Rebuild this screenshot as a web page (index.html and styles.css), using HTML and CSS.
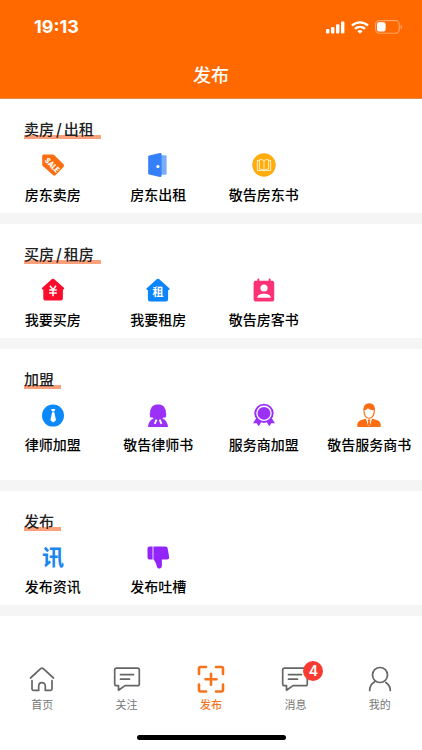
FILE: index.html
```html
<!DOCTYPE html>
<html lang="zh-CN">
<head>
<meta charset="utf-8">
<meta name="viewport" content="width=device-width, initial-scale=1">
<title>发布</title>
<link rel="stylesheet" href="styles.css">
</head>
<body>
<header class="header">
  <div class="status">
    <span class="time">19:13</span>
    <div class="status-icons">
      <svg width="19" height="13" viewBox="0 0 19 13" fill="#fff" aria-hidden="true">
        <rect x="0" y="8" width="3.4" height="4.5" rx="1"/><rect x="5" y="6" width="3.4" height="6.5" rx="1"/><rect x="10" y="3.2" width="3.4" height="9.3" rx="1"/><rect x="15" y="0.4" width="3.4" height="12.1" rx="1"/>
      </svg>
      <svg width="18" height="13" viewBox="0 0 18 13" fill="none" stroke="#fff" stroke-width="2.3" aria-hidden="true">
        <path d="M1 4.6a11.4 11.4 0 0 1 16 0"/><path d="M4 7.9a7.2 7.2 0 0 1 10 0"/><path d="M9 12.8 6.4 10.2a3.8 3.8 0 0 1 5.2 0z" fill="#fff" stroke="none"/>
      </svg>
      <svg width="28" height="14" viewBox="0 0 28 14" aria-hidden="true">
        <rect x=".6" y=".6" width="23.6" height="12.6" rx="3.6" fill="none" stroke="#ffa566" stroke-width="1.1"/><rect x="2" y="2.2" width="8.6" height="9.4" rx="2" fill="#fff"/><path d="M25.6 4.8c2 .8 2 3.6 0 4.4z" fill="#ffa566"/>
      </svg>
    </div>
  </div>
  <h1 class="page-title">发布</h1>
</header>

<main class="sections">
  <section class="section">
    <h2 class="section-title">卖房<span class="slash">/</span>出租</h2>
    <div class="grid">
      <a class="item" href="#">
        <svg class="icon" viewBox="0 0 24 24" aria-hidden="true"><path d="M2.6 1.5h9.2a2 2 0 0 1 1.3.5l9.4 9.3a2 2 0 0 1 0 2.6l-7.8 8.2a2 2 0 0 1-2.7 0L1.8 13a2 2 0 0 1-.6-1.3V3a1.5 1.5 0 0 1 1.4-1.5z" fill="#fa6d10"/><text class="sale" x="11.4" y="15" transform="rotate(45 11.4 12)">SALE</text></svg>
        <span class="label">房东卖房</span>
      </a>
      <a class="item" href="#">
        <svg class="icon" viewBox="0 0 24 24" aria-hidden="true"><path d="M15 2.2h4.4a1.2 1.2 0 0 1 1.2 1.2v17.2a1.2 1.2 0 0 1-1.2 1.2H15z" fill="#78acf9"/><path d="M3.1 2.5 14 0a1.3 1.3 0 0 1 1.6 1.2v21.4A1.3 1.3 0 0 1 14 23.9L3.1 21.5a1.2 1.2 0 0 1-.9-1.1V3.6a1.2 1.2 0 0 1 .9-1.1z" fill="#357ff8"/><circle cx="11.9" cy="13.5" r="1.6" fill="#fff"/></svg>
        <span class="label">房东出租</span>
      </a>
      <a class="item" href="#">
        <svg class="icon" viewBox="0 0 24 24" aria-hidden="true"><circle cx="12" cy="12" r="11.7" fill="#ffad0d"/><path d="M12 7.7C10.8 6.6 9 6.3 7.4 6.7v9.6c1.700-.3 3.400 0 4.600 1 1.200-1 2.900-1.300 4.600-1V6.700c-1.600-.4-3.400-.1-4.600 1zM12 7.700v9.600M7.400 7.500H5.300v10h5.400c.6.500 2 .500 2.600 0h5.400v-10h-2.100" fill="none" stroke="#fff3d5" stroke-width=".9" stroke-linejoin="round"/></svg>
        <span class="label">敬告房东书</span>
      </a>
    </div>
  </section>

  <section class="section">
    <h2 class="section-title">买房<span class="slash">/</span>租房</h2>
    <div class="grid">
      <a class="item" href="#">
        <svg class="icon" viewBox="0 0 24 24" aria-hidden="true"><path d="M11 1.100a1.700 1.700 0 0 1 2 0l9.900 8.700c.7.700.3 1.700-.6 1.700h-.4v8.900a2 2 0 0 1-2 2H4.300a2 2 0 0 1-2-2v-8.900h-.6c-.9 0-1.200-1-.5-1.700z" fill="#fb0d2c"/><path d="m9 7.800 3 4 3-4M12 11.800v6.500M8.200 12.100h7.600M8.200 15h7.600" fill="none" stroke="#fff" stroke-width="1.500"/></svg>
        <span class="label">我要买房</span>
      </a>
      <a class="item" href="#">
        <svg class="icon" viewBox="0 0 24 24" aria-hidden="true"><path d="M11 1a1.700 1.700 0 0 1 2 0l10.300 9.200c.6.600.3 1.700-.6 1.700h-.6v9.300a2.200 2.200 0 0 1-2.200 2.200H4.100a2.200 2.200 0 0 1-2.200-2.200v-9.300h-.6c-.9 0-1.200-1.100-.6-1.700z" fill="#0b85fb"/><text class="rent" x="12" y="18.200">租</text></svg>
        <span class="label">我要租房</span>
      </a>
      <a class="item" href="#">
        <svg class="icon" viewBox="0 0 24 24" aria-hidden="true"><path d="M5.300 1.500a1 1 0 0 1 2 0v1.300h9.400V1.500a1 1 0 0 1 2 0v1.300h1.500a2 2 0 0 1 2 2v16.600a2 2 0 0 1-2 2H3.600a2 2 0 0 1-2-2V4.800a2 2 0 0 1 2-2h1.700z" fill="#fb3275"/><circle cx="12" cy="10" r="3.600" fill="#fff"/><path d="M5.200 19.700c0-5.400 13.600-5.400 13.600 0z" fill="#fff"/></svg>
        <span class="label">敬告房客书</span>
      </a>
    </div>
  </section>

  <section class="section section-tall">
    <h2 class="section-title">加盟</h2>
    <div class="grid">
      <a class="item" href="#">
        <svg class="icon" viewBox="0 0 24 24" aria-hidden="true"><circle cx="12" cy="12.600" r="11" fill="#0b89fb"/><path d="M10 6.100h4.400l-1.200 2.500h-2zM11.100 9.200h2.200l1.700 8-2.800 2.400-2.800-2.400z" fill="#fff"/></svg>
        <span class="label">律师加盟</span>
      </a>
      <a class="item" href="#">
        <svg class="icon" viewBox="0 0 24 24" aria-hidden="true"><path d="M12 1.500c4 0 6.800 2 7 4.800 1 .7 1.200 1.500.6 2.700.9 1 .8 2 .4 3 .6 1.500-.2 2.600-1.500 2.600-1 0-1.600.4-2 1 3.500 1.500 5 4.200 5.600 8.400H1.900c.6-4.200 2.100-6.900 5.600-8.400-.4-.6-1-1-2-1-1.300 0-2.100-1.100-1.500-2.600-.4-1-.5-2 .4-3-.6-1.200-.4-2 .6-2.700.2-2.800 3-4.800 7-4.800z" fill="#9b30f7"/><path d="M9.600 16.200 11.400 17 9.600 21.200 7.900 20.600zM12.800 17l1.800-.8 1.700 4.400-1.700.6z" fill="#fff"/></svg>
        <span class="label">敬告律师书</span>
      </a>
      <a class="item" href="#">
        <svg class="icon" viewBox="0 0 24 24" aria-hidden="true"><path d="m5 14-4 6.300 3.700-.1 1.900 3 4-6h2.800l4 6 1.900-3 3.700.1-4-6.300z" fill="#9b30f7"/><circle cx="12" cy="10.300" r="8.700" fill="#fff" stroke="#9b30f7" stroke-width="1.900"/><circle cx="12" cy="10.300" r="6.400" fill="#9b30f7"/></svg>
        <span class="label">服务商加盟</span>
      </a>
      <a class="item" href="#">
        <svg class="icon" viewBox="0 0 24 24" aria-hidden="true"><path d="M6.500 8.500C6 3.200 8.300.3 12.200.3c4.200 0 6.300 3 5.700 7.700-.2 5-2.500 7.700-5.800 7.700-3.200 0-5.300-2.500-5.600-7.200z" fill="#fa6d10"/><path d="M7.500 7.300c1.600-.2 2.600-.9 3.300-2 1.500 1.300 3.400 1.900 6 2-.1 4.500-1.900 7.500-4.700 7.500s-4.500-3-4.600-7.500z" fill="#fff"/><path d="M8.500 15.700 3.500 17.200C1 18.200.2 20 .2 23a1 1 0 0 0 1 1h21.600a1 1 0 0 0 1-1c0-3-.8-4.800-3.300-5.800l-5-1.500L12 17z" fill="#fa6d10"/><path d="M8.900 15.600 11 22.500 12 23l1-.5 2.100-6.900L12 16.300z" fill="#fff"/><path d="M11 16.500h2l.4 1.200-.7.9.6 3.200L12 23l-1.300-1.200.6-3.200-.7-.9z" fill="#fa6d10"/></svg>
        <span class="label">敬告服务商书</span>
      </a>
    </div>
  </section>

  <section class="section">
    <h2 class="section-title">发布</h2>
    <div class="grid">
      <a class="item" href="#">
        <svg class="icon" viewBox="0 0 24 24" aria-hidden="true"><text class="news" x="12" y="20">讯</text></svg>
        <span class="label">发布资讯</span>
      </a>
      <a class="item" href="#">
        <svg class="icon" viewBox="0 0 24 24" aria-hidden="true"><path d="M3.500 1.500h3.100v13H3.500a2 2 0 0 1-2-2v-9a2 2 0 0 1 2-2zM7.400 1.500h12.200a2 2 0 0 1 2 1.600l1.500 8.700a2.300 2.300 0 0 1-2.300 2.700h-4.900v5.700c0 2.100-1 3.300-2.500 3.300s-2.200-.8-2.600-2.300c-.9-3.300-1.700-5.300-3.400-6.700z" fill="#9226fa"/></svg>
        <span class="label">发布吐槽</span>
      </a>
    </div>
  </section>
</main>

<nav class="tabs">
  <a class="tab" href="#">
    <svg class="tab-icon" viewBox="0 0 28 28" aria-hidden="true"><path d="M2.500 13 12.700 3.700a1.900 1.900 0 0 1 2.600 0L25.500 13M4 15.700v8a1.700 1.700 0 0 0 1.700 1.700h5V21c0-4.500 6.600-4.500 6.600 0v4.400h5a1.700 1.700 0 0 0 1.700-1.700v-8"/></svg>
    <span>首页</span>
  </a>
  <a class="tab" href="#">
    <svg class="tab-icon" viewBox="0 0 28 28" aria-hidden="true"><path d="M3.400 3.200h21.200a1.700 1.700 0 0 1 1.700 1.700v14a1.700 1.700 0 0 1-1.700 1.700H12l-6.500 4.700v-4.700H3.400a1.700 1.700 0 0 1-1.700-1.700v-14a1.700 1.700 0 0 1 1.700-1.700zM7.500 9.600h13M7.500 14.200h9"/></svg>
    <span>关注</span>
  </a>
  <a class="tab tab-active" href="#" aria-current="page">
    <svg class="tab-icon" viewBox="0 0 28 28" aria-hidden="true"><path d="M2 9V3.500A1.500 1.500 0 0 1 3.500 2H9M19 2h5.500A1.500 1.500 0 0 1 26 3.500V9M26 19.500V25a1.500 1.500 0 0 1-1.500 1.500H19M9 26.500H3.500A1.500 1.500 0 0 1 2 25v-5.500M8.500 14.300h11M14 8.800v11"/></svg>
    <span>发布</span>
  </a>
  <a class="tab" href="#">
    <span class="badge-box">
      <svg class="tab-icon" viewBox="0 0 28 28" aria-hidden="true"><path d="M3.400 3.200h21.200a1.700 1.700 0 0 1 1.700 1.700v14a1.700 1.700 0 0 1-1.700 1.700H12l-6.500 4.700v-4.700H3.400a1.700 1.700 0 0 1-1.700-1.700v-14a1.700 1.700 0 0 1 1.700-1.700zM7.500 9.600h13M7.500 14.200h9"/></svg>
      <span class="badge">4</span>
    </span>
    <span>消息</span>
  </a>
  <a class="tab" href="#">
    <svg class="tab-icon" viewBox="0 0 28 28" aria-hidden="true"><circle cx="14" cy="10" r="7.500"/><path d="M3.700 25.500c0-3.800 1.800-6.800 5-8.700M24.300 25.500c0-3.200-1.500-6-4.500-8"/></svg>
    <span>我的</span>
  </a>
</nav>
<div class="home-indicator"></div>
</body>
</html>
```
FILE: styles.css
```css
* {
  box-sizing: border-box;
}

body {
  margin: 0;
  min-height: 100vh;
  display: flex;
  flex-direction: column;
  background: #fff;
  color: #111;
  font-family: "Noto Sans CJK SC", sans-serif;
}

a {
  color: inherit;
  text-decoration: none;
}

svg {
  display: block;
}

.header {
  background: #ff6900;
  color: #fff;
  border-bottom: 1px solid #e58a4c;
}

.status {
  display: flex;
  justify-content: space-between;
  align-items: center;
  height: 54px;
  padding: 0 19px 0 34px;
}

.time {
  font: 700 18px/20px Inter, sans-serif;
}

.status-icons {
  display: flex;
  align-items: center;
  gap: 6px;
}

.page-title {
  margin: 0;
  padding: 8px 0 12px;
  text-align: center;
  font-size: 18px;
  line-height: 24px;
  font-weight: 500;
}

.section {
  padding: 20px 0 9px;
  border-bottom: 11px solid #f5f5f5;
}

.section-tall {
  padding-bottom: 26px;
}

.section-title {
  width: fit-content;
  margin: 0 0 14px 24px;
  padding-right: 7px;
  background: linear-gradient(#fba078, #fba078) bottom / 100% 4px no-repeat;
  color: #222;
  font-size: 15px;
  line-height: 20px;
  font-weight: 500;
}

.slash {
  padding: 0 2px;
  font-weight: 700;
}

.grid {
  display: grid;
  grid-template-columns: repeat(4, 1fr);
}

.item {
  display: flex;
  flex-direction: column;
  align-items: center;
  gap: 7px;
}

.icon {
  width: 24px;
  height: 24px;
  overflow: visible;
}

.icon text {
  text-anchor: middle;
  font-weight: 700;
  fill: #fff;
}

.icon .sale {
  font-family: "Liberation Sans Narrow", "Roboto Condensed", Roboto, sans-serif;
  font-size: 8px;
  font-weight: 900;
}

.icon .rent {
  font-size: 11px;
}

.icon .news {
  font-size: 22px;
  fill: #1b86ee;
}

.label {
  color: #000;
  font-size: 14px;
  line-height: 20px;
  font-weight: 500;
  white-space: nowrap;
}

.tabs {
  display: grid;
  grid-template-columns: repeat(5, 1fr);
  margin-top: auto;
  padding-bottom: 23px;
}

.tab {
  display: flex;
  flex-direction: column;
  align-items: center;
  gap: 3px;
  color: #777;
  font-size: 11px;
  line-height: 16px;
}

.tab-icon {
  width: 28px;
  height: 28px;
  fill: none;
  stroke: #666;
  stroke-width: 1.7;
  stroke-linecap: round;
  stroke-linejoin: round;
}

.tab-active {
  color: #f5731c;
  font-weight: 500;
}

.tab-active .tab-icon {
  stroke: #f5731c;
  stroke-width: 2.6;
}

.badge-box {
  position: relative;
}

.badge {
  position: absolute;
  top: -4px;
  right: -14px;
  width: 20px;
  height: 20px;
  border-radius: 50%;
  background: #f93c32;
  color: #fff;
  text-align: center;
  font: 600 14px/20px Inter, sans-serif;
}

.home-indicator {
  width: 149px;
  height: 5px;
  margin: 0 auto 10px;
  border-radius: 3px;
  background: #000;
}
```
